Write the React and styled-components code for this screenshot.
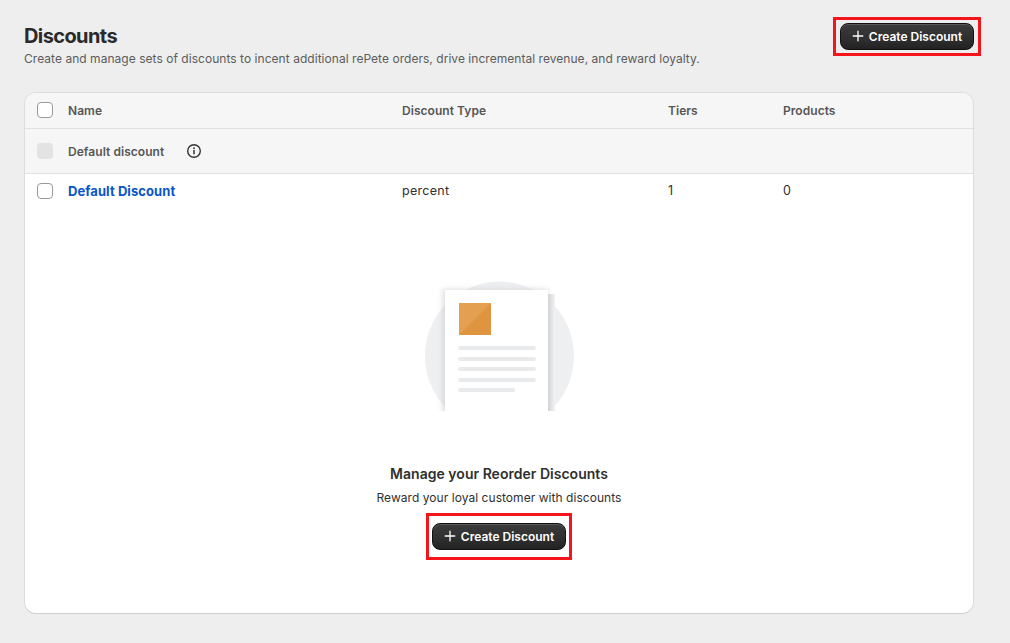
import React from "react";
import styled, { createGlobalStyle } from "styled-components";

const Global = createGlobalStyle`
  html, body { margin: 0; padding: 0; background: #eeeeee; }
  body { font-family: Inter, "Liberation Sans", sans-serif; color: #303030; -webkit-font-smoothing: antialiased; }
`;
const Page = styled.div`
  width: 1010px; height: 643px; box-sizing: border-box; padding: 17px 29px 0 24px; overflow: hidden;
`;
const Header = styled.header`
  display: flex; justify-content: space-between; align-items: flex-start; height: 75px;
`;
const TitleBlock = styled.div`padding-top: 6px;`;
const Title = styled.h1`
  margin: 0; font-size: 20px; line-height: 26px; font-weight: 700; letter-spacing: -0.6px; color: #2a2a2a;
`;
const Subtitle = styled.p`
  margin: 2px 0 0; font-size: 12px; line-height: 16px; color: #5c5c5c; letter-spacing: 0.04px;
`;
const Highlight = styled.div`
  display: inline-flex; box-sizing: border-box; width: ${p => p.$w}px; height: ${p => p.$h}px;
  align-items: center; justify-content: center; border: 3px solid #f5141c;
`;
const Button = styled.button`
  display: flex; align-items: center; justify-content: center; gap: 5px;
  width: 134px; height: 27px; padding: 0 0 1px; border-radius: 8px; border: 1px solid #111;
  background: linear-gradient(#3c3c3c, #2c2c2c 70%, #222);
  box-shadow: inset 0 1px 0 #5a5a5a;
  color: #fff; font: 600 12px Inter, "Liberation Sans", sans-serif; letter-spacing: 0;
`;
const Card = styled.section`
  width: 950px; height: 522px; box-sizing: border-box; background: #fff; border: 1px solid #dcdcdc;
  border-bottom-color: #cfcfcf; border-radius: 12px; overflow: hidden; display: flex; flex-direction: column;
`;
const Row = styled.div`
  display: grid; grid-template-columns: 31px 334px 266px 115px 1fr; align-items: center;
  padding: 0 0 ${p => p.$lift || 0}px 12px; height: ${p => p.$h}px; box-sizing: border-box; flex: none;
  background: ${p => p.$bg || "#fff"};
  border-bottom: ${p => p.$line ? "1px solid #e1e1e1" : "none"};
  font-size: 12.5px; color: #303030; letter-spacing: 0.3px;
`;
const Head = styled.span`font-size: 12px; letter-spacing: 0.05px; font-weight: 600; color: #565656;`;
const Check = styled.span`
  width: 16px; height: 16px; box-sizing: border-box; border-radius: 4px; display: block;
  border: ${p => p.$off ? "none" : "1px solid #999"};
  background: ${p => p.$off ? "#e3e3e3" : "#fff"};
`;
const GroupName = styled.span`
  grid-column: 2 / 6; display: flex; align-items: center; gap: 22px;
  font-size: 12px; letter-spacing: 0.05px; font-weight: 600; color: #565656;
`;
const NameLink = styled.a`font-weight: 700; color: #0a55c8; font-size: 13px; letter-spacing: 0.08px;`;
const Empty = styled.div`
  flex: 1; display: flex; flex-direction: column; align-items: center; padding-top: 74px;
`;
const Art = styled.svg`display: block; width: 150px; height: 132px;`;
const EmptyTitle = styled.h2`
  margin: 51px 0 0; font-size: 14px; line-height: 20px; font-weight: 600; color: #2f2f2f; letter-spacing: 0.02px;
`;
const EmptyText = styled.p`
  margin: 6px 0 0; font-size: 12px; line-height: 16px; color: #303030; letter-spacing: 0.05px;
`;
const EmptyAction = styled.div`margin-top: 7px;`;

const Plus = () => (
  <svg width="12" height="12" viewBox="0 0 12 12" fill="none">
    <path d="M6 1.2v9.6M1.2 6h9.6" stroke="#fff" strokeWidth="1.3" strokeLinecap="round" />
  </svg>
);
const Info = () => (
  <svg width="16" height="16" viewBox="0 0 16 16" fill="none">
    <circle cx="8" cy="8" r="6.3" stroke="#333" strokeWidth="1.4" />
    <path d="M8 7.4v3.4" stroke="#333" strokeWidth="1.5" strokeLinecap="round" />
    <circle cx="8" cy="5.2" r="0.9" fill="#333" />
  </svg>
);
const Create = () => <Button><Plus />Create Discount</Button>;

const Illustration = () => (
  <Art viewBox="0 0 150 132">
    <defs>
      <filter id="blur" x="-20%" y="-20%" width="140%" height="140%"><feGaussianBlur stdDeviation="2.5" /></filter>
      <clipPath id="clip"><rect x="0" y="0" width="150" height="130" /></clipPath>
      <linearGradient id="side" x1="0" x2="1" y1="0" y2="0">
        <stop offset="0" stopColor="#d4d5d8" /><stop offset="1" stopColor="#f4f4f5" />
      </linearGradient>
    </defs>
    <g clipPath="url(#clip)">
      <circle cx="75.5" cy="75" r="74.5" fill="#eeeff1" />
      <rect x="124" y="13" width="7" height="120" fill="url(#side)" />
      <rect x="18.5" y="8" width="105.5" height="130" fill="#c9cacd" opacity="0.6" filter="url(#blur)" />
      <rect x="21" y="9" width="103" height="123" fill="#fff" />
    </g>
    <rect x="35" y="22" width="32" height="32" fill="#e59f50" />
    <path d="M35 54 67 22v32z" fill="#df9440" />
    <rect x="34" y="65" width="78" height="4" rx="2" fill="#e9eaeb" />
    <rect x="34" y="76" width="78" height="4" rx="2" fill="#e9eaeb" />
    <rect x="34" y="86" width="78" height="4" rx="2" fill="#e9eaeb" />
    <rect x="34" y="97" width="78" height="4" rx="2" fill="#e9eaeb" />
    <rect x="34" y="107" width="57" height="4" rx="2" fill="#e9eaeb" />
  </Art>
);

export default function App() {
  return (
    <Page>
      <Global />
      <Header>
        <TitleBlock>
          <Title>Discounts</Title>
          <Subtitle>Create and manage sets of discounts to incent additional rePete orders, drive incremental revenue, and reward loyalty.</Subtitle>
        </TitleBlock>
        <Highlight $w={148} $h={39}><Create /></Highlight>
      </Header>
      <Card>
        <Row $h={36} $bg="#f6f6f6" $line $lift={1}>
          <Check />
          <Head>Name</Head>
          <Head>Discount Type</Head>
          <Head>Tiers</Head>
          <Head>Products</Head>
        </Row>
        <Row $h={45} $bg="#f6f6f6" $line>
          <Check $off />
          <GroupName>Default discount <Info /></GroupName>
        </Row>
        <Row $h={33}>
          <Check />
          <NameLink>Default Discount</NameLink>
          <span>percent</span>
          <span>1</span>
          <span>0</span>
        </Row>
        <Empty>
          <Illustration />
          <EmptyTitle>Manage your Reorder Discounts</EmptyTitle>
          <EmptyText>Reward your loyal customer with discounts</EmptyText>
          <EmptyAction><Highlight $w={146} $h={47}><Create /></Highlight></EmptyAction>
        </Empty>
      </Card>
    </Page>
  );
}
